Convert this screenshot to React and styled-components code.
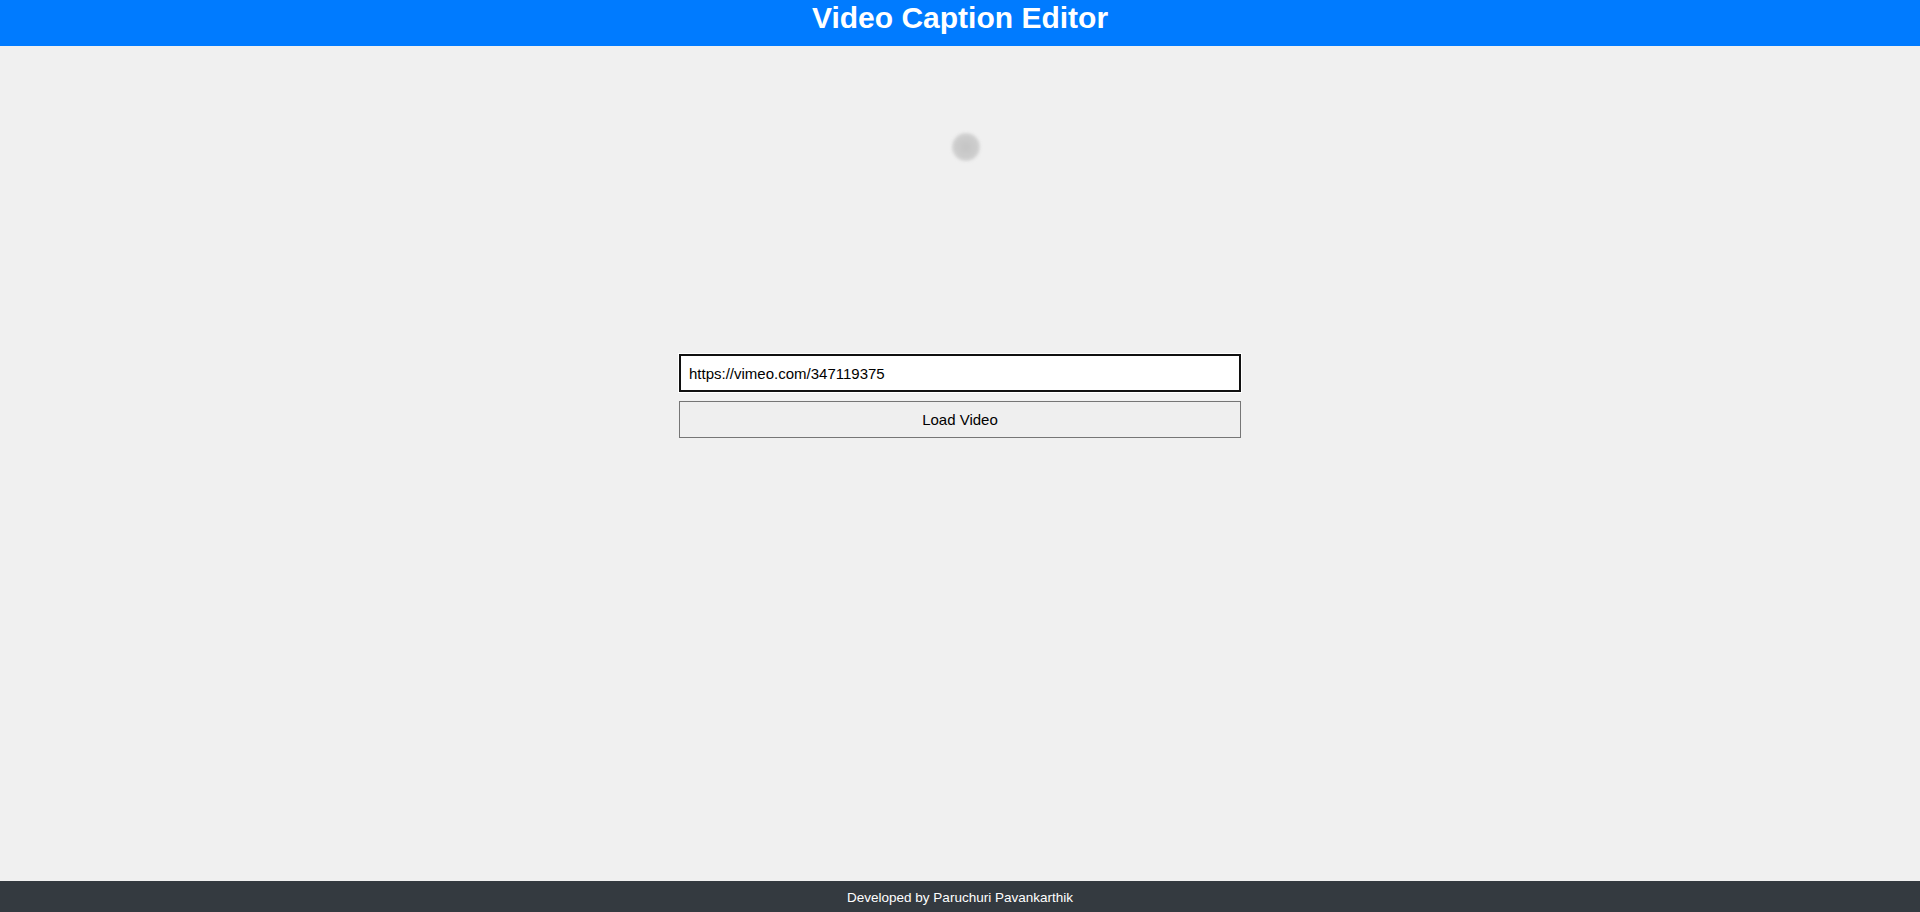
import React from "react";
import styled, { createGlobalStyle } from "styled-components";

const GlobalStyle = createGlobalStyle`
  html, body {
    margin: 0;
    padding: 0;
    height: 100%;
  }
  body {
    background-color: #f0f0f0;
    font-family: "Liberation Sans", Arial, sans-serif;
  }
  #root {
    min-height: 100%;
  }
`;

export default function App() {
  return (
    <Page>
      <GlobalStyle />
      <Header>
        <Title>Video Caption Editor</Title>
      </Header>
      <Main>
        <Stage>
          <Spinner />
        </Stage>
        <Form>
          <UrlInput defaultValue="https://vimeo.com/347119375" autoFocus />
          <LoadButton type="button">Load Video</LoadButton>
        </Form>
      </Main>
      <Footer>Developed by Paruchuri Pavankarthik</Footer>
    </Page>
  );
}

const Page = styled.div`
  display: flex;
  flex-direction: column;
  height: 912px;
`;

const Header = styled.header`
  display: flex;
  justify-content: center;
  align-items: flex-start;
  height: 46px;
  box-sizing: border-box;
  padding-top: 1px;
  background-color: #007bff;
`;

const Title = styled.h1`
  margin: 0;
  font-size: 30px;
  line-height: 34px;
  font-weight: 700;
  color: #fff;
`;

const Main = styled.main`
  flex: 1;
  display: flex;
  flex-direction: column;
  align-items: center;
`;

const Stage = styled.div`
  display: flex;
  justify-content: center;
  width: 574px;
  height: 308px;
  padding-left: 12px;
  box-sizing: border-box;
`;

const Spinner = styled.div`
  width: 28px;
  height: 28px;
  margin-top: 87px;
  border-radius: 50%;
  background: radial-gradient(circle, #c4c4c4 0%, #cdcdcd 55%, #e4e4e4 100%);
  filter: blur(1.5px);
`;

const Form = styled.div`
  display: flex;
  flex-direction: column;
  gap: 9px;
  width: 562px;
`;

const UrlInput = styled.input`
  box-sizing: border-box;
  height: 38px;
  width: 100%;
  padding: 0 8px;
  border: 2px solid #101010;
  box-shadow: 0 0 0 1px #fff;
  outline: none;
  background: #fff;
  font-family: "Liberation Sans", Arial, sans-serif;
  font-size: 15px;
  color: #000;
`;

const LoadButton = styled.button`
  box-sizing: border-box;
  height: 37px;
  width: 100%;
  border: 1px solid #767676;
  background-color: #efefef;
  font-family: "Liberation Sans", Arial, sans-serif;
  font-size: 15px;
  color: #000;
`;

const Footer = styled.footer`
  height: 31px;
  display: flex;
  justify-content: center;
  align-items: center;
  padding-top: 2px;
  box-sizing: border-box;
  background-color: #343a40;
  color: #fff;
  font-size: 13.5px;
`;
